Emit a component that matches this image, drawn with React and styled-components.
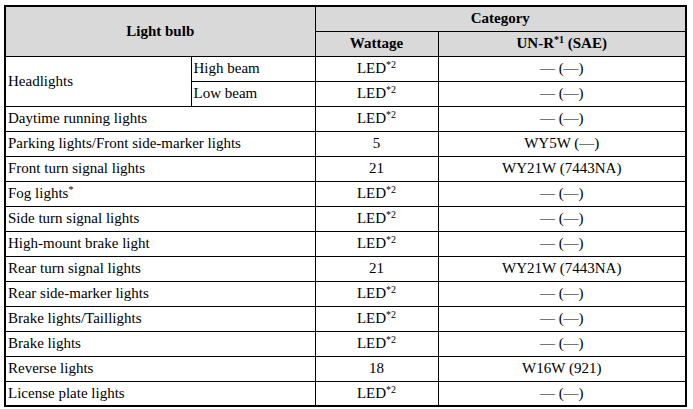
import React from 'react';
import styled, { createGlobalStyle } from 'styled-components';

const GlobalStyle = createGlobalStyle`
  html, body {
    margin: 0;
    padding: 0;
    background: #ffffff;
  }
  body {
    font-family: "Liberation Serif", "Times New Roman", serif;
    color: #000000;
  }
`;

const Page = styled.div`
  padding: 5px 0 0 4px;
`;

const Table = styled.table`
  border-collapse: collapse;
  table-layout: fixed;
  width: 681px;
  border: 2px solid #000;
  font-family: "Liberation Serif", "Times New Roman", serif;
  font-size: 15px;
  line-height: 17px;
  color: #000;
`;

const Row = styled.tr`
  height: 25px;
`;

const Head = styled.th`
  background: #d9d9d9;
  border: 1px solid #000;
  font-family: "Liberation Serif", "Times New Roman", serif;
  font-weight: bold;
  text-align: center;
  vertical-align: middle;
  padding: 0 3px;
`;

const Cell = styled.td`
  border: 1px solid #000;
  padding: ${(p) => (p.$center ? '0 3px' : '0 3px 0 2px')};
  font-family: "Liberation Serif", "Times New Roman", serif;
  vertical-align: middle;
  text-align: ${(p) => (p.$center ? 'center' : 'left')};
  white-space: nowrap;
`;

const Sup = styled.sup`
  font-size: 10px;
  line-height: 0;
  vertical-align: 5px;
`;

const LED = () => (
  <>
    LED<Sup>*2</Sup>
  </>
);

const NONE = '— (—)';

const rows = [
  { name: 'Daytime running lights', watt: <LED />, code: NONE },
  { name: 'Parking lights/Front side-marker lights', watt: '5', code: 'WY5W (—)' },
  { name: 'Front turn signal lights', watt: '21', code: 'WY21W (7443NA)' },
  { name: <>Fog lights<Sup>*</Sup></>, watt: <LED />, code: NONE },
  { name: 'Side turn signal lights', watt: <LED />, code: NONE },
  { name: 'High-mount brake light', watt: <LED />, code: NONE },
  { name: 'Rear turn signal lights', watt: '21', code: 'WY21W (7443NA)' },
  { name: 'Rear side-marker lights', watt: <LED />, code: NONE },
  { name: 'Brake lights/Taillights', watt: <LED />, code: NONE },
  { name: 'Brake lights', watt: <LED />, code: NONE },
  { name: 'Reverse lights', watt: '18', code: 'W16W (921)' },
  { name: 'License plate lights', watt: <LED />, code: NONE },
];

export default function App() {
  return (
    <Page>
      <GlobalStyle />
      <Table>
        <colgroup>
          <col style={{ width: 186 }} />
          <col style={{ width: 124 }} />
          <col style={{ width: 123 }} />
          <col style={{ width: 248 }} />
        </colgroup>
        <thead>
          <Row>
            <Head rowSpan={2} colSpan={2}>Light bulb</Head>
            <Head colSpan={2}>Category</Head>
          </Row>
          <Row>
            <Head>Wattage</Head>
            <Head>
              UN-R<Sup>*1</Sup> (SAE)
            </Head>
          </Row>
        </thead>
        <tbody>
          <Row>
            <Cell rowSpan={2}>Headlights</Cell>
            <Cell>High beam</Cell>
            <Cell $center><LED /></Cell>
            <Cell $center>{NONE}</Cell>
          </Row>
          <Row>
            <Cell>Low beam</Cell>
            <Cell $center><LED /></Cell>
            <Cell $center>{NONE}</Cell>
          </Row>
          {rows.map((r, i) => (
            <Row key={i}>
              <Cell colSpan={2}>{r.name}</Cell>
              <Cell $center>{r.watt}</Cell>
              <Cell $center>{r.code}</Cell>
            </Row>
          ))}
        </tbody>
      </Table>
    </Page>
  );
}
